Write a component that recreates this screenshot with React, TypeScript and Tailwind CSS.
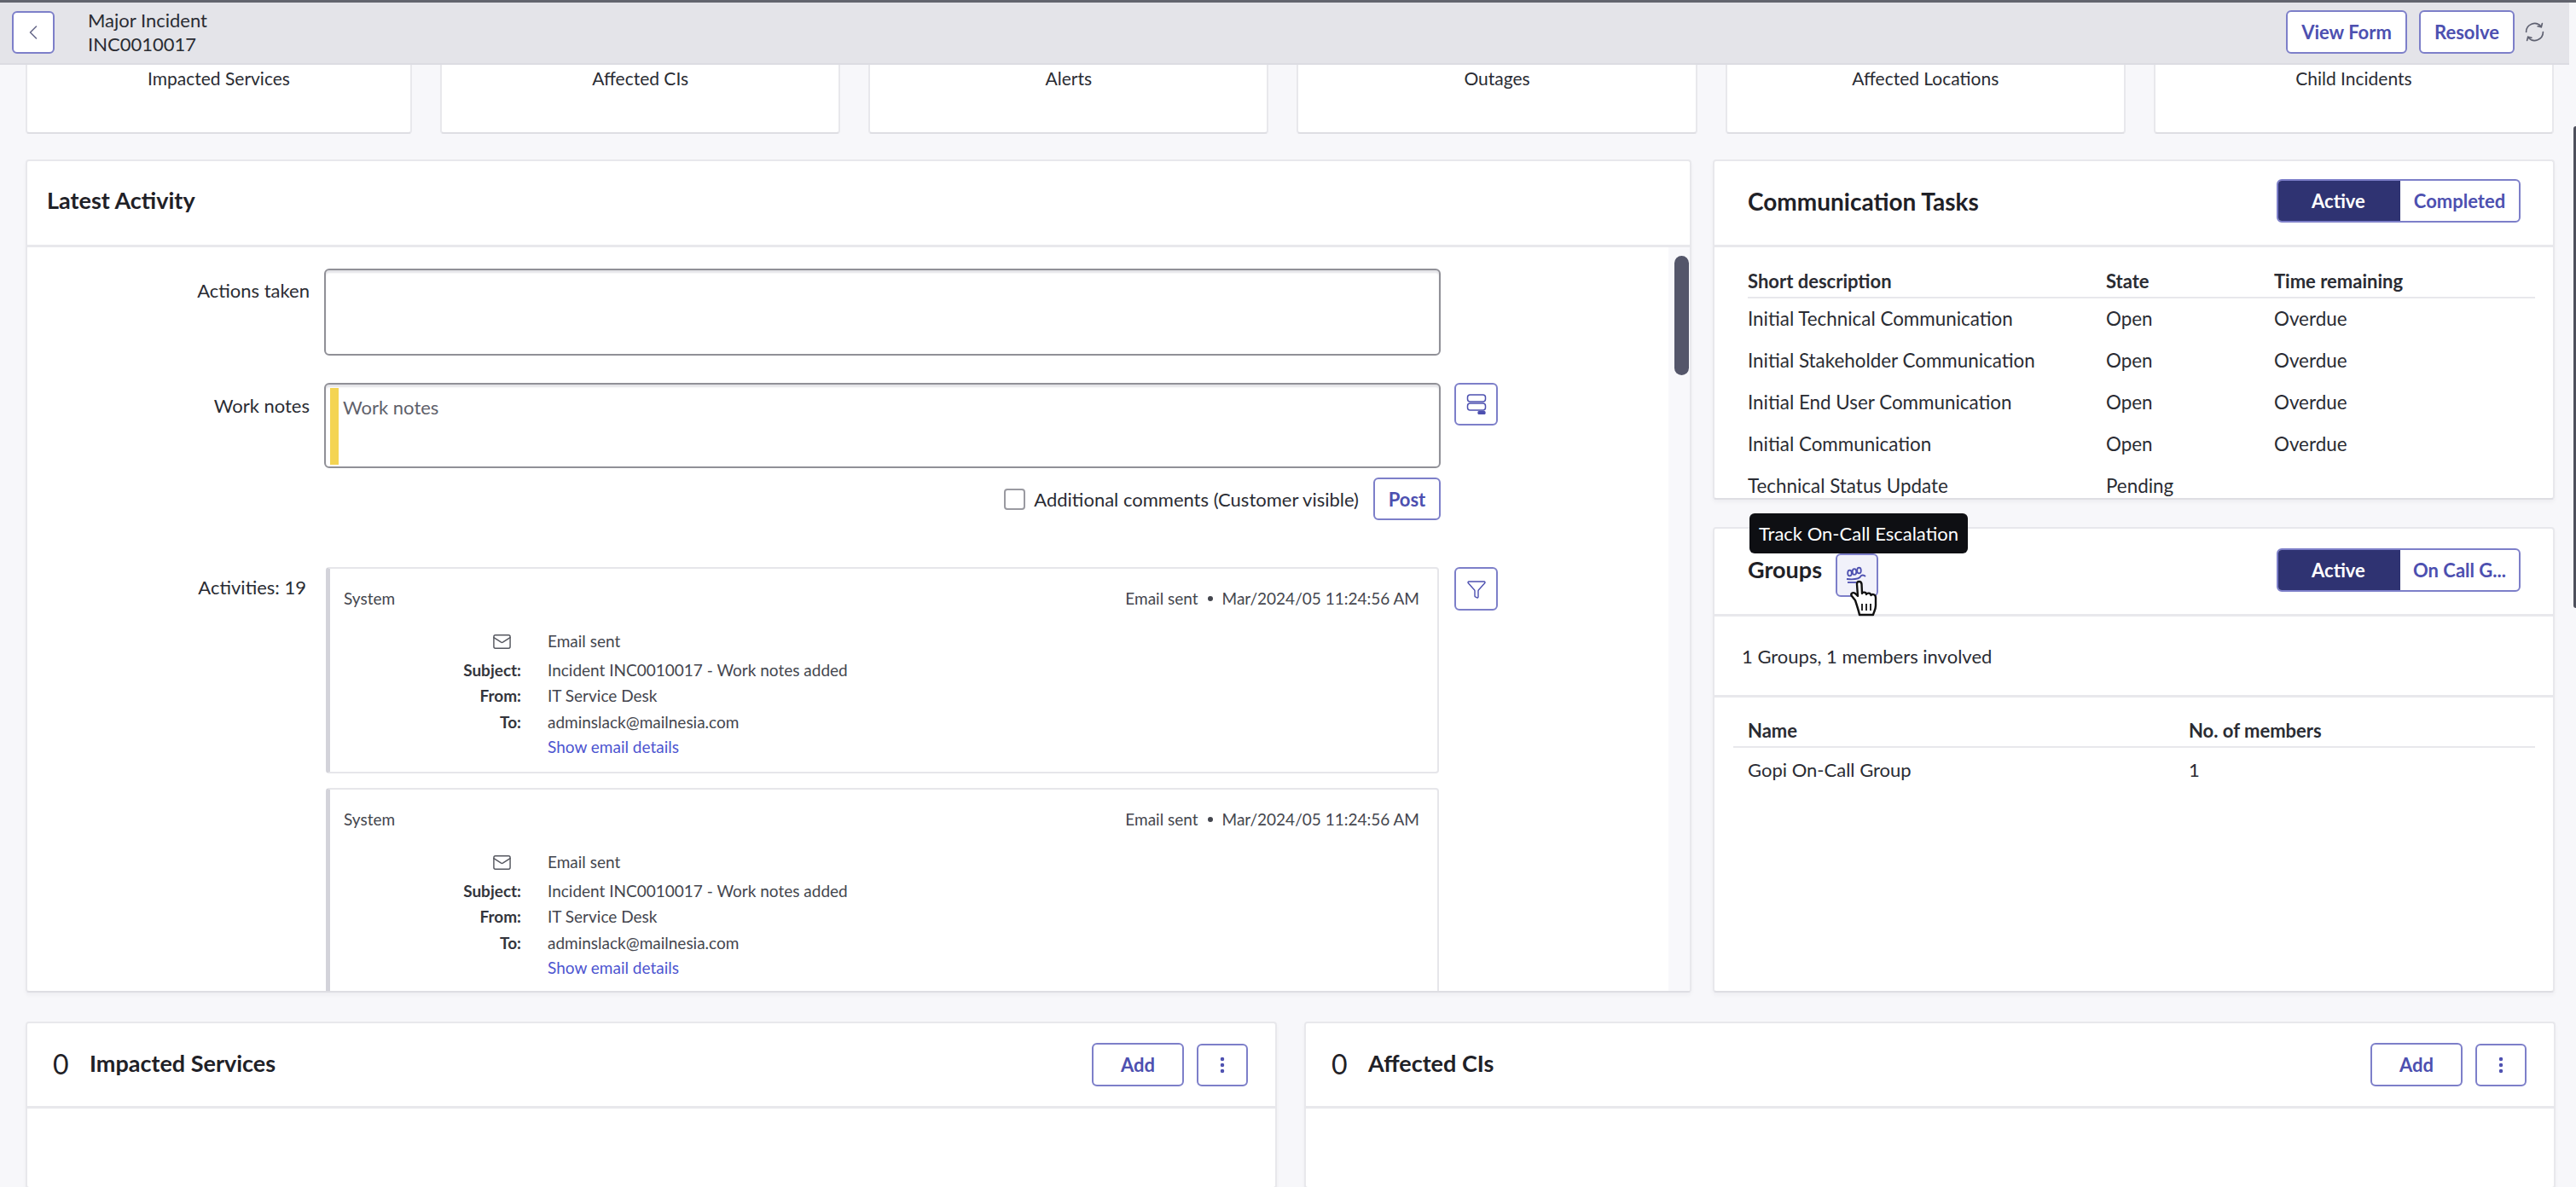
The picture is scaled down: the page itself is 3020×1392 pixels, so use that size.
import { ChevronLeft, EllipsisVertical, Funnel, Mail } from "lucide-react"
import type { ReactNode } from "react"

const topCards = ["Affected CIs", "Alerts", "Outages", "Affected Locations", "Child Incidents"]

const tasks = [
  ["Initial Technical Communication", "Open", "Overdue"],
  ["Initial Stakeholder Communication", "Open", "Overdue"],
  ["Initial End User Communication", "Open", "Overdue"],
  ["Initial Communication", "Open", "Overdue"],
  ["Technical Status Update", "Pending", ""],
]

function OutlineButton({ className, bg = "bg-white", children }: { className: string; bg?: string; children: ReactNode }) {
  return (
    <button className={`flex shrink-0 items-center justify-center rounded-[6px] border-2 border-[#7d7fc9] text-[22px] font-bold text-[#4d50b0] ${bg} ${className}`}>
      {children}
    </button>
  )
}

function Toggle({ second }: { second: string }) {
  return (
    <div className="flex h-[51px] w-[286px] overflow-hidden rounded-[6px] border-2 border-[#7d7fc9] bg-white text-[22px] font-bold">
      <div className="-my-[2px] -ml-[2px] flex w-[145px] items-center justify-center bg-[#2f3372] text-white">Active</div>
      <div className="flex flex-1 items-center justify-center text-[#4d50b0]">{second}</div>
    </div>
  )
}

function Panel({ className, children }: { className: string; children: ReactNode }) {
  return (
    <section className={`flex flex-col overflow-hidden rounded-[4px] border-2 border-[#e8e8ec] border-b-[#dedee3] bg-white shadow-[0_3px_5px_rgba(30,30,60,0.04)] ${className}`}>
      {children}
    </section>
  )
}

function TopCard({ name, className }: { name: string; className: string }) {
  return (
    <div className={`h-[81px] rounded-b-[4px] border-2 border-t-0 border-[#e8e8ec] border-b-[#dedee3] bg-white pt-[4px] text-center text-[21px] leading-[24px] ${className}`}>
      {name}
    </div>
  )
}

function EmailRow({ label, children, className }: { label: ReactNode; children: ReactNode; className: string }) {
  return (
    <div className={`flex gap-[31px] leading-[24px] ${className}`}>
      <div className="flex w-[208px] justify-end font-bold text-[#33353c]">{label}</div>
      <div>{children}</div>
    </div>
  )
}

function ActivityCard() {
  return (
    <div className="h-[242px] w-[1305px] shrink-0 rounded-[4px] border-2 border-l-[5px] border-[#e6e6ea] border-l-[#d3d3da] pt-[23px] pr-[21px] pl-[16px] text-[19px] text-[#44464e]">
      <div className="flex justify-between leading-[24px]">
        <span>System</span>
        <span className="flex items-center gap-[11px]">
          Email sent
          <span className="h-[6px] w-[6px] rounded-full bg-[#44464e]" />
          Mar/2024/05 11:24:56 AM
        </span>
      </div>
      <div className="mt-[26px] flex flex-col">
        <EmailRow className="h-[34px]" label={<Mail className="mt-px mr-[11px] h-[23px] w-[23px] text-[#55575f]" strokeWidth={1.5} />}>
          Email sent
        </EmailRow>
        <EmailRow className="h-[30px]" label="Subject:">Incident INC0010017 - Work notes added</EmailRow>
        <EmailRow className="h-[31px]" label="From:">IT Service Desk</EmailRow>
        <EmailRow className="h-[29px]" label="To:">adminslack@mailnesia.com</EmailRow>
        <EmailRow className="h-[30px]" label="">
          <span className="text-[#4d55d0]">Show email details</span>
        </EmailRow>
      </div>
    </div>
  )
}

function CountPanel({ title, className }: { title: string; className: string }) {
  return (
    <Panel className={`h-[196px] ${className}`}>
      <div className="flex h-[100px] shrink-0 items-center border-b-[3px] border-[#e8e8ec] pr-[32px] pl-[30px]">
        <span className="mb-[2px] w-[43px] text-[32px] text-[#1f2127]">0</span>
        <h2 className="mb-[2px] flex-1 text-[27px] font-bold text-[#1f2127]">{title}</h2>
        <OutlineButton className="h-[51px] w-[108px]">Add</OutlineButton>
        <OutlineButton className="ml-[15px] h-[50px] w-[60px]">
          <EllipsisVertical className="h-[24px] w-[24px]" strokeWidth={2.5} />
        </OutlineButton>
      </div>
    </Panel>
  )
}

function HandCursor() {
  return (
    <svg viewBox="0 0 36 44" className="absolute top-[31px] left-[15px] h-[44px] w-[36px]">
      <path
        d="M8 24 L4 19 C2 16 5 14 8 16 L11 19 L10 5 C10 1 15 1 15.5 5 L16 16 C16 14 21 14 21 17 C22 15 26 15 26.500 18 C28 16 32 17 32 21 L32 30 C32 35 30 37 29 41 L13 41 C12 36 10 30 8 24 Z"
        fill="#fff"
        stroke="#111"
        strokeWidth="2.4"
        strokeLinejoin="round"
      />
      <path d="M16 28 V36 M21 28 V36 M26 28 V36" stroke="#111" strokeWidth="1.8" />
    </svg>
  )
}

function RefreshIcon() {
  return (
    <svg viewBox="0 0 24 24" className="ml-[11px] h-[25px] w-[25px] text-[#5e6070]" fill="none" stroke="currentColor" strokeWidth="1.6" strokeLinecap="round">
      <path d="M2.500 12 A9.500 9.500 0 0 1 19 5.500" />
      <path d="M21.500 12 A9.500 9.500 0 0 1 5 18.500" />
      <path d="M20.500 2.500 L19.500 6.500 L15.500 5.500" />
      <path d="M3.500 21.500 L4.500 17.500 L8.500 18.500" />
    </svg>
  )
}

export default function App() {
  return (
    <div className="relative h-[1392px] w-[3020px] overflow-hidden bg-[#f7f7fa] font-['Lato','Liberation_Sans',sans-serif] text-[22px] text-[#2a2c33]">
      <div className="h-[3px] bg-[#62646e]" />
      <header className="flex h-[73px] w-[3012px] items-center border-b-2 border-b-[#dcdce2] bg-[#e4e4e9] pr-[28px] pb-[2px] pl-[14px]">
        <button className="flex h-[50px] w-[50px] items-center justify-center rounded-[6px] border-2 border-[#7d7fc9] bg-white text-[#6a6c8c]">
          <ChevronLeft className="h-[28px] w-[28px]" strokeWidth={1.4} />
        </button>
        <div className="ml-[39px] flex-1 text-[22px] leading-[28px] text-[#2a2c33]">
          <div>Major Incident</div>
          <div>INC0010017</div>
        </div>
        <OutlineButton className="h-[51px] w-[142px]">View Form</OutlineButton>
        <OutlineButton className="ml-[14px] h-[51px] w-[112px]">Resolve</OutlineButton>
        <RefreshIcon />
      </header>

      <div className="flex gap-[33px] pr-[26px] pl-[30px]">
        <TopCard name="Impacted Services" className="w-[453px] shrink-0" />
        {topCards.map((name) => (
          <TopCard key={name} name={name} className="flex-1" />
        ))}
      </div>

      <div className="mt-[30px] flex gap-[25px] pl-[30px]">
        <Panel className="h-[977px] w-[1953px]">
          <div className="flex h-[101px] shrink-0 items-center border-b-[3px] border-[#e8e8ec] pb-[5px] pl-[23px]">
            <h2 className="text-[27px] font-bold text-[#1f2127]">Latest Activity</h2>
          </div>
          <div className="relative flex-1 overflow-hidden pt-[25px]">
            <div className="flex">
              <div className="w-[331px] pt-[14px] text-right leading-[24px]">Actions taken</div>
              <div className="ml-[17px] h-[102px] w-[1309px] rounded-[6px] border-2 border-[#909097] bg-white shadow-[inset_0_3px_2px_#e4e4e8]" />
            </div>
            <div className="mt-[32px] flex">
              <div className="w-[331px] pt-[15px] text-right leading-[24px]">Work notes</div>
              <div className="ml-[17px] flex h-[100px] w-[1309px] rounded-[6px] border-2 border-[#909097] bg-white pt-[2px] pl-[5px] shadow-[inset_0_3px_2px_#e4e4e8]">
                <div className="mt-[2px] h-[90px] w-[10px] bg-[#f4d452]" />
                <div className="ml-[5px] pt-[13px] leading-[24px] text-[#5f616b]">Work notes</div>
              </div>
              <OutlineButton className="ml-[16px] h-[50px] w-[51px]">
                <svg viewBox="0 0 24 24" className="h-[24px] w-[24px]" fill="none" stroke="currentColor" strokeWidth="1.5">
                  <rect x="1.500" y="1" width="21" height="8" rx="3" />
                  <rect x="1.500" y="11" width="21" height="8" rx="3" />
                  <rect x="14" y="20.500" width="8" height="3" rx="1.500" fill="currentColor" />
                </svg>
              </OutlineButton>
            </div>
            <div className="mt-[11px] ml-[348px] flex w-[1309px] items-center justify-end">
              <span className="h-[25px] w-[25px] rounded-[4px] border-2 border-[#9a9aa1] bg-white" />
              <span className="ml-[10px]">Additional comments (Customer visible)</span>
              <OutlineButton className="ml-[17px] h-[50px] w-[79px]">Post</OutlineButton>
            </div>
            <div className="mt-[55px] flex">
              <div className="w-[327px] pt-[12px] text-right leading-[24px]">Activities: 19</div>
              <div className="ml-[23px] flex w-[1305px] flex-col gap-[17px]">
                <ActivityCard />
                <ActivityCard />
              </div>
              <OutlineButton className="ml-[18px] h-[51px] w-[51px]">
                <Funnel className="h-[24px] w-[24px]" strokeWidth={1.4} />
              </OutlineButton>
            </div>
            <div className="absolute top-0 right-0 bottom-0 w-[25px] bg-[#f8f8fb]">
              <div className="mt-[10px] ml-[7px] h-[140px] w-[17px] rounded-full bg-[#54566a]" />
            </div>
          </div>
        </Panel>

        <div className="flex w-[987px] flex-col gap-[32px]">
          <Panel className="h-[399px]">
            <div className="flex h-[101px] shrink-0 items-center justify-between border-b-[3px] border-[#e8e8ec] pr-[38px] pb-[5px] pl-[39px]">
              <h2 className="text-[28px] font-bold text-[#1f2127]">Communication Tasks</h2>
              <Toggle second="Completed" />
            </div>
            <div className="pt-[23px] pr-[21px] pl-[39px]">
              <div className="flex h-[37px] border-b-2 border-[#e8e8ec] font-bold">
                <span className="w-[420px]">Short description</span>
                <span className="w-[197px]">State</span>
                <span>Time remaining</span>
              </div>
              <div className="mt-[6px] flex flex-col gap-[13px] text-[22.4px]">
                {tasks.map((row) => (
                  <div key={row[0]} className="flex h-[36px] items-center">
                    <span className="w-[420px]">{row[0]}</span>
                    <span className="w-[197px]">{row[1]}</span>
                    <span>{row[2]}</span>
                  </div>
                ))}
              </div>
            </div>
          </Panel>

          <Panel className="h-[546px] overflow-visible">
            <div className="relative flex h-[103px] shrink-0 items-center border-b-[3px] border-[#e8e8ec] pr-[38px] pb-[4px] pl-[39px]">
              <h2 className="text-[27px] font-bold text-[#1f2127]">Groups</h2>
              <div className="relative mt-[12px] ml-[16px]">
                <OutlineButton className="h-[51px] w-[50px]" bg="bg-[#f1f1fa]">
                  <svg viewBox="0 0 28 24" className="h-[24px] w-[28px]" fill="none" stroke="currentColor" strokeWidth="1.8">
                    <ellipse cx="5.500" cy="10" rx="2.300" ry="3.400" />
                    <ellipse cx="11" cy="8.500" rx="2.300" ry="3.400" />
                    <ellipse cx="16.500" cy="7" rx="2.300" ry="3.400" />
                    <path d="M2 17 C11 18 17 17 19 13 C21 12 23 13 24 14" />
                    <path d="M3 21 H13" />
                  </svg>
                </OutlineButton>
                <HandCursor />
              </div>
              <div className="ml-auto">
                <Toggle second="On Call G..." />
              </div>
              <div className="absolute -top-[18px] left-[41px] flex h-[47px] w-[256px] items-center justify-center rounded-[6px] bg-[#0e0f13] text-white">
                Track On-Call Escalation
              </div>
            </div>
            <div className="flex h-[95px] shrink-0 items-center border-b-[3px] border-[#e8e8ec] pl-[32px]">
              1 Groups, 1 members involved
            </div>
            <div className="pt-[22px] pr-[21px] pl-[22px]">
              <div className="flex h-[37px] border-b-2 border-[#e8e8ec] pl-[17px] font-bold">
                <span className="w-[517px]">Name</span>
                <span>No. of members</span>
              </div>
              <div className="mt-[9px] flex pl-[17px]">
                <span className="w-[517px]">Gopi On-Call Group</span>
                <span>1</span>
              </div>
            </div>
          </Panel>
        </div>
      </div>

      <div className="mt-[34px] flex gap-[32px] pl-[30px]">
        <CountPanel title="Impacted Services" className="w-[1467px]" />
        <CountPanel title="Affected CIs" className="w-[1467px]" />
      </div>

      <div className="absolute top-[148px] right-0 h-[565px] w-[3px] rounded-l-full bg-[#4e505c]" />
    </div>
  )
}
